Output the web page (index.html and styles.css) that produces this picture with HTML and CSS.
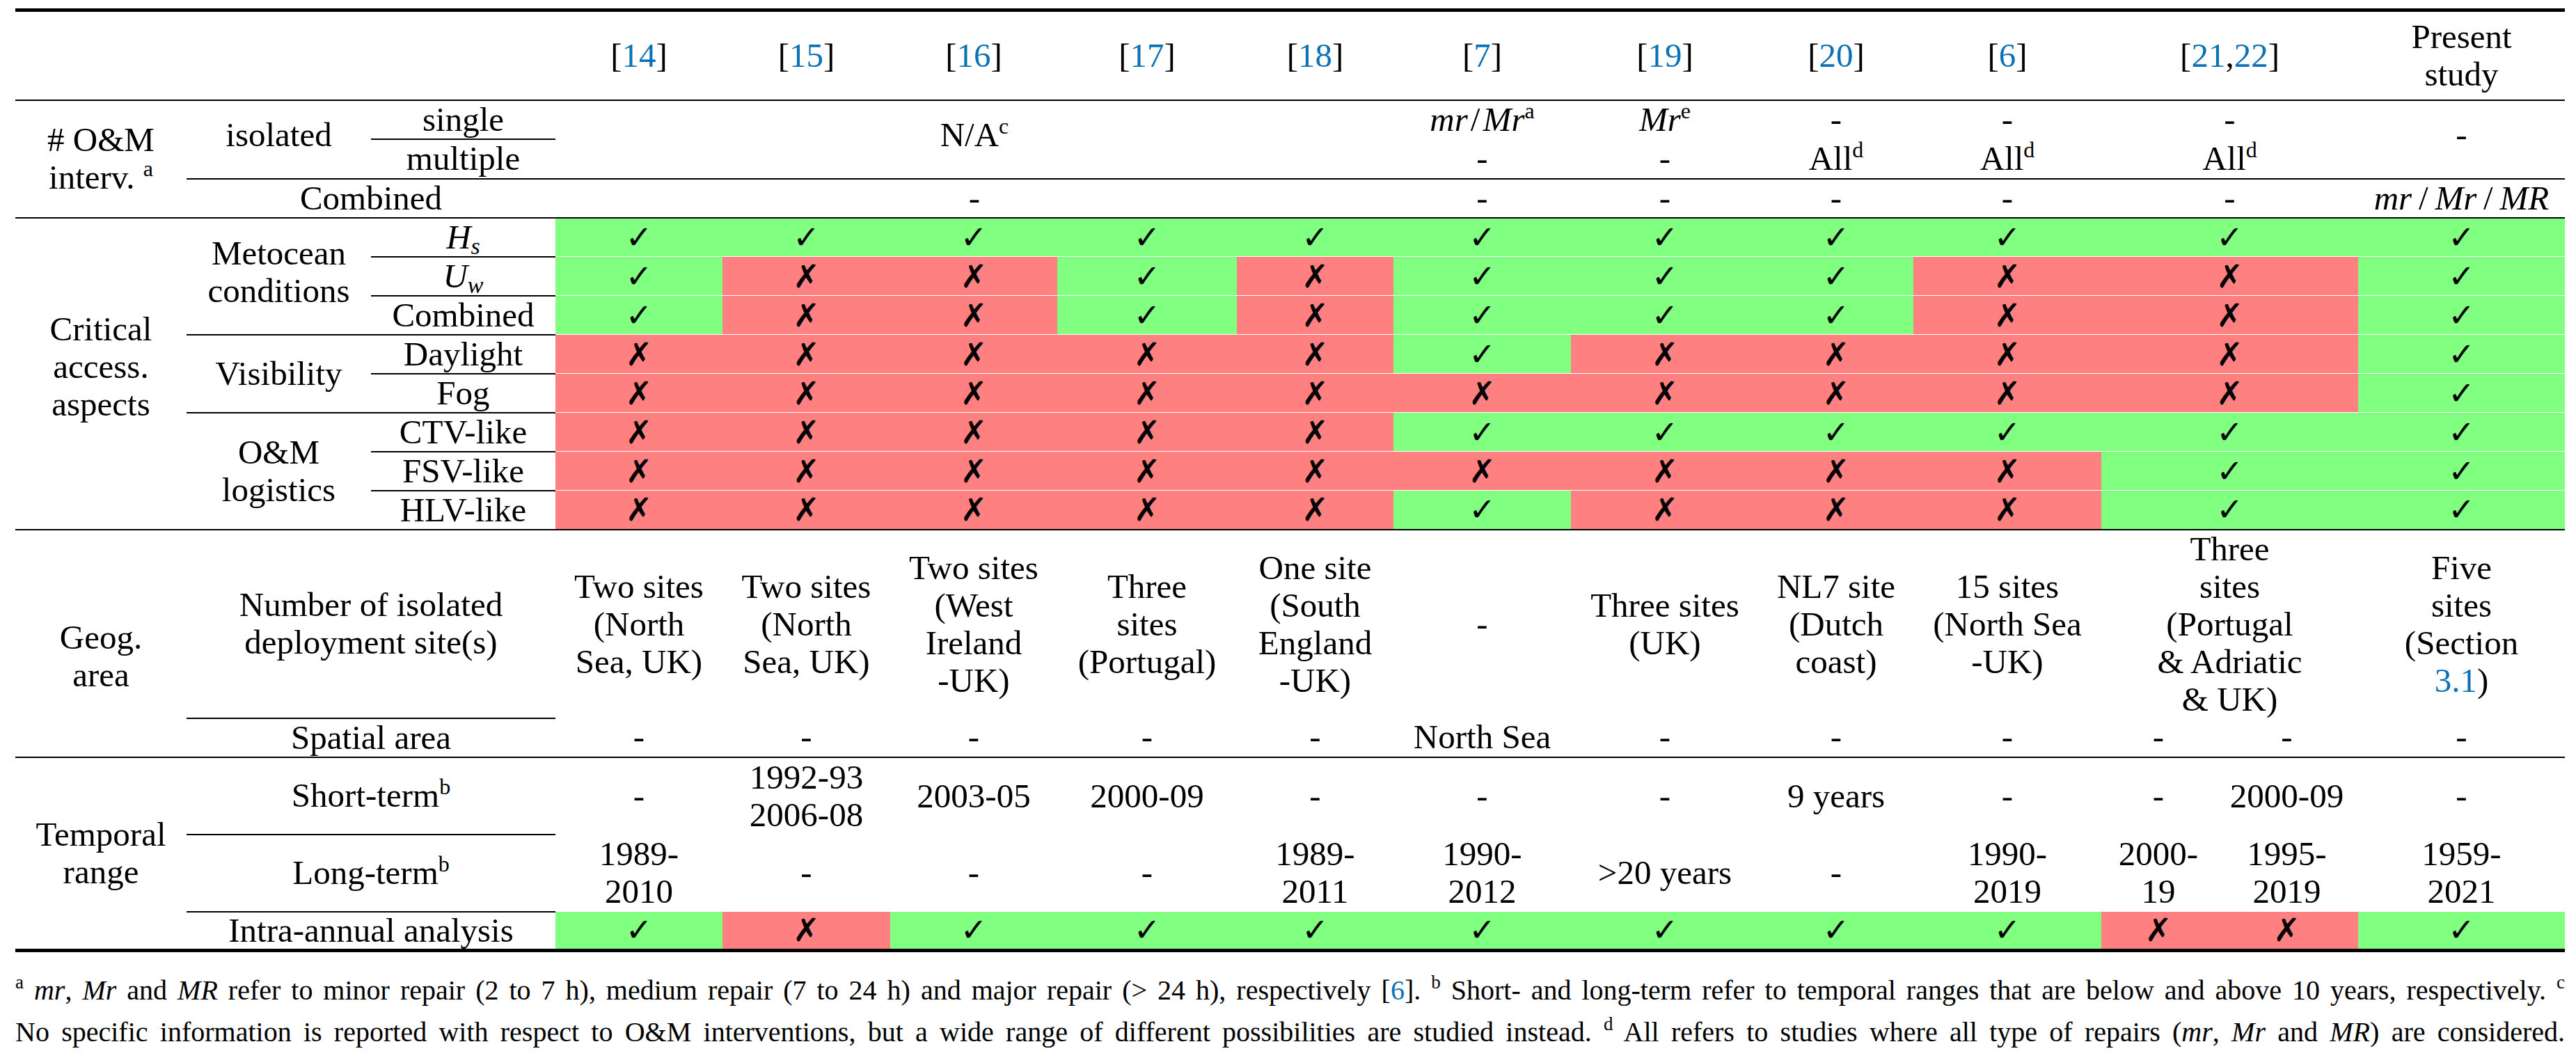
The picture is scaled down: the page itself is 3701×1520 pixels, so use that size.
FILE: index.html
```html
<!DOCTYPE html>
<html lang="en">
<head>
<meta charset="utf-8">
<title>Comparison of studies</title>
<link rel="stylesheet" href="styles.css">
</head>
<body>
<div class="page">
<table class="comp">
  <colgroup>
    <col class="w-c1"><col class="w-c2"><col class="w-c3">
    <col class="w-14"><col class="w-15"><col class="w-16"><col class="w-17"><col class="w-18">
    <col class="w-7"><col class="w-19"><col class="w-20"><col class="w-6">
    <col class="w-21a"><col class="w-21b"><col class="w-pr">
  </colgroup>
  <tbody>
    <tr class="h-head">
      <td class="bb" colspan="3"></td>
      <td class="bb">[<span class="cite">14</span>]</td>
      <td class="bb">[<span class="cite">15</span>]</td>
      <td class="bb">[<span class="cite">16</span>]</td>
      <td class="bb">[<span class="cite">17</span>]</td>
      <td class="bb">[<span class="cite">18</span>]</td>
      <td class="bb">[<span class="cite">7</span>]</td>
      <td class="bb">[<span class="cite">19</span>]</td>
      <td class="bb">[<span class="cite">20</span>]</td>
      <td class="bb">[<span class="cite">6</span>]</td>
      <td class="bb" colspan="2">[<span class="cite">21</span>,<span class="cite">22</span>]</td>
      <td class="bb">Present<br>study</td>
    </tr>

    <tr class="h-single">
      <td class="bb" rowspan="3"># O&amp;M<br>interv. <sup>a</sup></td>
      <td class="bb lift" rowspan="2">isolated</td>
      <td class="bb">single</td>
      <td class="bb lift" colspan="5" rowspan="2">N/A<sup>c</sup></td>
      <td><i>mr</i>&#8202;/&#8202;<i>Mr</i><sup>a</sup></td>
      <td><i>Mr</i><sup>e</sup></td>
      <td>-</td>
      <td>-</td>
      <td colspan="2">-</td>
      <td class="bb lift" rowspan="2">-</td>
    </tr>
    <tr class="h-multi">
      <td class="bb">multiple</td>
      <td class="bb">-</td>
      <td class="bb">-</td>
      <td class="bb">All<sup>d</sup></td>
      <td class="bb">All<sup>d</sup></td>
      <td class="bb" colspan="2">All<sup>d</sup></td>
    </tr>
    <tr class="h-row">
      <td class="bb" colspan="2">Combined</td>
      <td class="bb" colspan="5">-</td>
      <td class="bb">-</td>
      <td class="bb">-</td>
      <td class="bb">-</td>
      <td class="bb">-</td>
      <td class="bb" colspan="2">-</td>
      <td class="bb"><i>mr</i>&thinsp;/&thinsp;<i>Mr</i>&thinsp;/&thinsp;<i>MR</i></td>
    </tr>

    <tr class="h-row">
      <td class="bb crit" rowspan="8">Critical<br>access.<br>aspects</td>
      <td class="bb meto" rowspan="3">Metocean<br>conditions</td>
      <td class="bb"><i>H<sub>s</sub></i></td>
      <td class="g">✓</td><td class="g">✓</td><td class="g">✓</td><td class="g">✓</td><td class="g">✓</td>
      <td class="g">✓</td><td class="g">✓</td><td class="g">✓</td><td class="g">✓</td>
      <td class="g" colspan="2">✓</td><td class="g">✓</td>
    </tr>
    <tr class="h-row">
      <td class="bb"><i>U<sub>w</sub></i></td>
      <td class="g">✓</td><td class="r">✗</td><td class="r">✗</td><td class="g">✓</td><td class="r">✗</td>
      <td class="g">✓</td><td class="g">✓</td><td class="g">✓</td><td class="r">✗</td>
      <td class="r" colspan="2">✗</td><td class="g">✓</td>
    </tr>
    <tr class="h-row">
      <td class="bb">Combined</td>
      <td class="g">✓</td><td class="r">✗</td><td class="r">✗</td><td class="g">✓</td><td class="r">✗</td>
      <td class="g">✓</td><td class="g">✓</td><td class="g">✓</td><td class="r">✗</td>
      <td class="r" colspan="2">✗</td><td class="g">✓</td>
    </tr>
    <tr class="h-row">
      <td class="bb" rowspan="2">Visibility</td>
      <td class="bb">Daylight</td>
      <td class="r">✗</td><td class="r">✗</td><td class="r">✗</td><td class="r">✗</td><td class="r">✗</td>
      <td class="g">✓</td><td class="r">✗</td><td class="r">✗</td><td class="r">✗</td>
      <td class="r" colspan="2">✗</td><td class="g">✓</td>
    </tr>
    <tr class="h-row">
      <td class="bb">Fog</td>
      <td class="r">✗</td><td class="r">✗</td><td class="r">✗</td><td class="r">✗</td><td class="r">✗</td>
      <td class="r">✗</td><td class="r">✗</td><td class="r">✗</td><td class="r">✗</td>
      <td class="r" colspan="2">✗</td><td class="g">✓</td>
    </tr>
    <tr class="h-row">
      <td class="bb" rowspan="3">O&amp;M<br>logistics</td>
      <td class="bb">CTV-like</td>
      <td class="r">✗</td><td class="r">✗</td><td class="r">✗</td><td class="r">✗</td><td class="r">✗</td>
      <td class="g">✓</td><td class="g">✓</td><td class="g">✓</td><td class="g">✓</td>
      <td class="g" colspan="2">✓</td><td class="g">✓</td>
    </tr>
    <tr class="h-row">
      <td class="bb">FSV-like</td>
      <td class="r">✗</td><td class="r">✗</td><td class="r">✗</td><td class="r">✗</td><td class="r">✗</td>
      <td class="r">✗</td><td class="r">✗</td><td class="r">✗</td><td class="r">✗</td>
      <td class="g" colspan="2">✓</td><td class="g">✓</td>
    </tr>
    <tr class="h-row last">
      <td class="bb">HLV-like</td>
      <td class="r">✗</td><td class="r">✗</td><td class="r">✗</td><td class="r">✗</td><td class="r">✗</td>
      <td class="g">✓</td><td class="r">✗</td><td class="r">✗</td><td class="r">✗</td>
      <td class="g" colspan="2">✓</td><td class="g">✓</td>
    </tr>

    <tr class="h-geo">
      <td class="bb geog" rowspan="2">Geog.<br>area</td>
      <td class="bb" colspan="2">Number of isolated<br>deployment site(s)</td>
      <td>Two sites<br>(North<br>Sea, UK)</td>
      <td>Two sites<br>(North<br>Sea, UK)</td>
      <td>Two sites<br>(West<br>Ireland<br>-UK)</td>
      <td>Three<br>sites<br>(Portugal)</td>
      <td>One site<br>(South<br>England<br>-UK)</td>
      <td>-</td>
      <td>Three sites<br>(UK)</td>
      <td>NL7 site<br>(Dutch<br>coast)</td>
      <td>15 sites<br>(North Sea<br>-UK)</td>
      <td colspan="2">Three<br>sites<br>(Portugal<br>&amp; Adriatic<br>&amp; UK)</td>
      <td>Five<br>sites<br>(Section<br><span class="cite">3.1</span>)</td>
    </tr>
    <tr class="h-row">
      <td class="bb" colspan="2">Spatial area</td>
      <td class="bb">-</td><td class="bb">-</td><td class="bb">-</td><td class="bb">-</td><td class="bb">-</td>
      <td class="bb">North Sea</td>
      <td class="bb">-</td><td class="bb">-</td><td class="bb">-</td>
      <td class="bb">-</td><td class="bb">-</td>
      <td class="bb">-</td>
    </tr>

    <tr class="h-two">
      <td class="temp" rowspan="3">Temporal<br>range</td>
      <td class="bb" colspan="2">Short-term<sup>b</sup></td>
      <td>-</td>
      <td>1992-93<br>2006-08</td>
      <td>2003-05</td>
      <td>2000-09</td>
      <td>-</td>
      <td>-</td>
      <td>-</td>
      <td>9 years</td>
      <td>-</td>
      <td>-</td>
      <td>2000-09</td>
      <td>-</td>
    </tr>
    <tr class="h-two">
      <td class="bb" colspan="2">Long-term<sup>b</sup></td>
      <td>1989-<br>2010</td>
      <td>-</td>
      <td>-</td>
      <td>-</td>
      <td>1989-<br>2011</td>
      <td>1990-<br>2012</td>
      <td>&gt;20 years</td>
      <td>-</td>
      <td>1990-<br>2019</td>
      <td>2000-<br>19</td>
      <td>1995-<br>2019</td>
      <td>1959-<br>2021</td>
    </tr>
    <tr class="h-intra">
      <td colspan="2">Intra-annual analysis</td>
      <td class="g">✓</td><td class="r">✗</td><td class="g">✓</td><td class="g">✓</td><td class="g">✓</td>
      <td class="g">✓</td><td class="g">✓</td><td class="g">✓</td><td class="g">✓</td>
      <td class="r">✗</td><td class="r">✗</td><td class="g">✓</td>
    </tr>
  </tbody>
</table>

<div class="notes">
  <p class="note-line"><sup>a</sup> <i>mr</i>, <i>Mr</i> and <i>MR</i> refer to minor repair (2 to 7 h), medium repair (7 to 24 h) and major repair (&gt; 24 h), respectively [<span class="cite">6</span>]. <sup>b</sup> Short- and long-term refer to temporal ranges that are below and above 10 years, respectively. <sup>c</sup></p>
  <p class="note-line">No specific information is reported with respect to O&amp;M interventions, but a wide range of different possibilities are studied instead. <sup>d</sup> All refers to studies where all type of repairs (<i>mr</i>, <i>Mr</i> and <i>MR</i>) are considered.</p>
</div>
</div>
</body>
</html>
```

FILE: styles.css
```css
html, body {
  margin: 0;
  padding: 0;
  background: #ffffff;
}

body {
  font-family: "Liberation Serif", "DejaVu Serif", serif;
  font-size: 49px;
  color: #000000;
}

.page {
  padding: 12px 0 0 22px;
  width: 3663px;
}

.comp {
  border-collapse: collapse;
  table-layout: fixed;
  width: 3663px;
  border-top: 5px solid #000;
  border-bottom: 5px solid #000;
}

.w-c1 { width: 246px; }
.w-c2 { width: 265px; }
.w-c3 { width: 265px; }
.w-14 { width: 240px; }
.w-15 { width: 241px; }
.w-16 { width: 240px; }
.w-17 { width: 258px; }
.w-18 { width: 225px; }
.w-7 { width: 255px; }
.w-19 { width: 270px; }
.w-20 { width: 222px; }
.w-6 { width: 270px; }
.w-21a { width: 164px; }
.w-21b { width: 205px; }
.w-pr { width: 297px; }

.comp td {
  padding: 0;
  text-align: center;
  vertical-align: middle;
  line-height: 54px;
  white-space: nowrap;
}

.h-head { height: 129px; }
.h-single { height: 56px; }
.h-multi { height: 57px; }
.h-row { height: 56px; }
.h-geo { height: 271px; }
.h-two { height: 111px; }
.h-intra { height: 56px; }

.h-intra td { line-height: 48px; }

.comp td.bb { border-bottom: 2px solid #000; }

.comp td.g,
.comp td.r {
  font-family: "DejaVu Sans", sans-serif;
  font-size: 46px;
  border-bottom: 1px solid #ffffff;
}

.comp td.g { background: #80ff80; }
.comp td.r { background: #ff8080; }

.comp tr.last td { border-bottom: 2px solid #000; }

.comp td.lift { padding-bottom: 12px; }
.comp td.crit { padding-bottom: 20px; }
.comp td.meto { padding-bottom: 12px; }
.comp td.geog { padding-top: 38px; }

.cite { color: #0b72b5; }

sup {
  font-size: 32px;
  line-height: 0;
  vertical-align: 18px;
}

sub {
  font-size: 34px;
  line-height: 0;
  vertical-align: -8px;
}

.notes {
  margin-top: 25px;
  font-size: 40px;
  line-height: 60px;
}

.note-line {
  margin: 0;
  text-align: justify;
  text-align-last: justify;
}

.notes sup {
  font-size: 27px;
  vertical-align: 16px;
}
```
